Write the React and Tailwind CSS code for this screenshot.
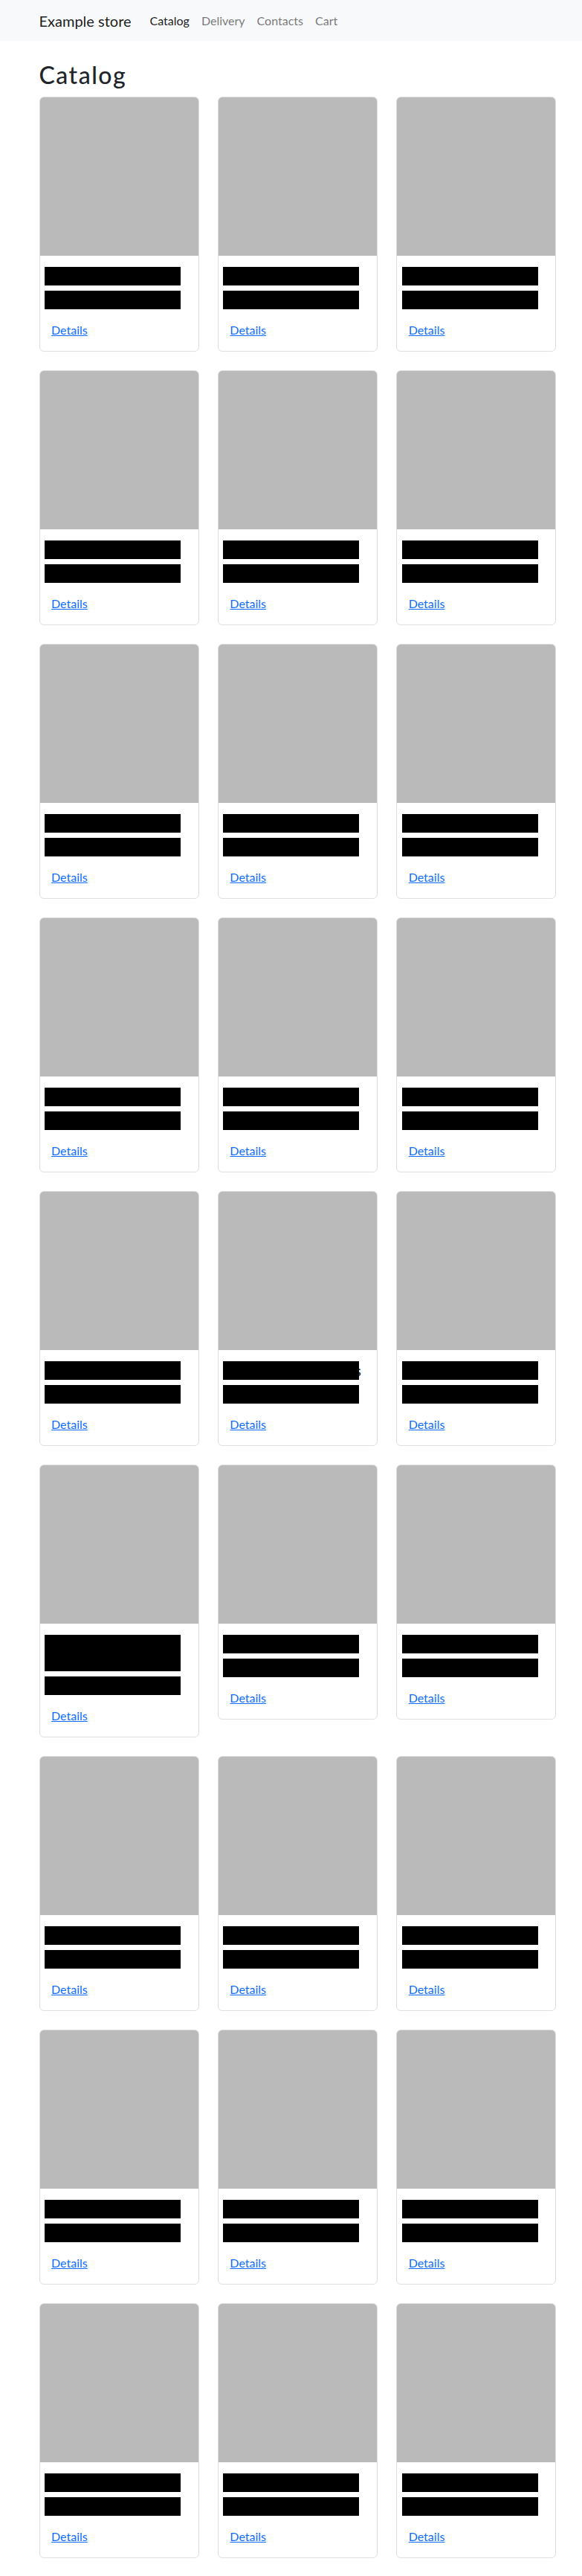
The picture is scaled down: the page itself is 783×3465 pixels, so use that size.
const font = { fontFamily: "Lato, 'Liberation Sans', sans-serif" };

const products = Array.from({ length: 27 }, (_, i) => ({
  id: i + 1,
  tall: i === 15,
  tail: i === 13 ? "s" : null,
}));

const ProductCard = ({ tall, tail }) => {
  return (
    <div className="flex flex-col border border-[#dfdfdf] rounded-[6px] bg-white overflow-hidden">
      <div className="h-[213px] bg-[#bababa]" />
      <div className="flex flex-col pt-[15px] pb-[16px]">
        <div className="flex items-center">
          <div className={`relative z-10 ml-[6.5px] w-[183px] bg-black ${tall ? "h-[49px]" : "h-[25px]"}`} />
          {tail && <span className="-ml-[6px] text-[20px] leading-[25px] text-[#212529]">{tail}</span>}
        </div>
        <div className="ml-[6.5px] mt-[7px] w-[183px] h-[25px] bg-black" />
        <a href="#" className="mt-[16px] ml-[15.5px] self-start text-[16px] leading-[24px] text-[#0d6efd] underline">
          Details
        </a>
      </div>
    </div>
  );
};

const App = () => {
  return (
    <div className="min-h-[3465px] bg-white text-[#212529]" style={font}>
      <nav className="h-[55px] bg-[#f8f9fa] flex items-center pl-[52.5px]">
        <span className="text-[20px] leading-[30px] text-black/90 mr-[17px]">Example store</span>
        <ul className="flex items-center text-[16px] leading-[24px]">
          <li className="px-[8px] text-black/90">Catalog</li>
          <li className="px-[8px] text-black/55">Delivery</li>
          <li className="px-[8px] text-black/55">Contacts</li>
          <li className="px-[8px] text-black/55">Cart</li>
        </ul>
      </nav>
      <div className="ml-[52.5px] w-[696px] pb-[25px]">
        <h1 className="pt-[26px] mb-[9px] text-[32px] leading-[40px] font-medium tracking-[1.5px]">Catalog</h1>
        <div className="grid grid-cols-3 gap-x-[25px] gap-y-[25px] items-start">
          {products.map((p) => (
            <ProductCard key={p.id} tall={p.tall} tail={p.tail} />
          ))}
        </div>
      </div>
    </div>
  );
};

export default App;
